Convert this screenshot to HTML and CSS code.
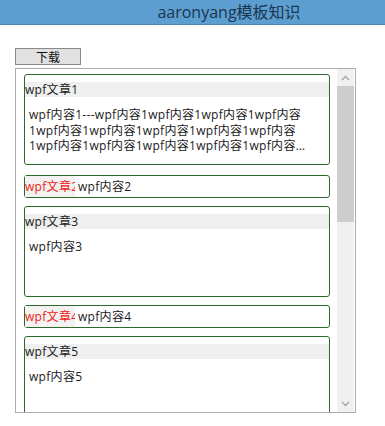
FILE: index.html
```html
<!DOCTYPE html>
<html lang="zh-cn">

<head>
    <meta charset="UTF-8">
    <title>aaronyang模板知识</title>
    <link rel="stylesheet" href="styles.css">
</head>

<body>
    <div class="titlebar">aaronyang模板知识</div>

    <div class="toolbar">
        <button class="btnDownload" type="button">下载</button>
    </div>

    <!-- 文章列表 -->
    <div class="listbox">
        <div class="items">
            <div class="item item-big">
                <div class="item-title">wpf文章1</div>
                <div class="item-content">wpf内容1---wpf内容1wpf内容1wpf内容1wpf内容1wpf内容1wpf内容1wpf内容1wpf内容1wpf内容1wpf内容1wpf内容1wpf内容1wpf内容1wpf内容1wpf内容1wpf内容1</div>
            </div>
            <div class="item item-small">
                <span class="item-name">wpf文章2</span>
                <span class="item-text">wpf内容2</span>
            </div>
            <div class="item item-big">
                <div class="item-title">wpf文章3</div>
                <div class="item-content">wpf内容3</div>
            </div>
            <div class="item item-small">
                <span class="item-name">wpf文章4</span>
                <span class="item-text">wpf内容4</span>
            </div>
            <div class="item item-big">
                <div class="item-title">wpf文章5</div>
                <div class="item-content">wpf内容5</div>
            </div>
        </div>
        <div class="scrollbar">
            <div class="arrow arrow-up">
                <svg width="9" height="6" viewBox="0 0 9 6"><path d="M1 5 L4.5 1.5 L8 5" fill="none" stroke="#a3a3a3" stroke-width="1.3"/></svg>
            </div>
            <div class="thumb"></div>
            <div class="track"></div>
            <div class="arrow arrow-down">
                <svg width="9" height="6" viewBox="0 0 9 6"><path d="M1 1 L4.5 4.5 L8 1" fill="none" stroke="#a3a3a3" stroke-width="1.3"/></svg>
            </div>
        </div>
    </div>
</body>

</html>
```

FILE: styles.css
```css
body {
    margin: 0;
    font-family: "Open Sans", "Noto Sans CJK SC", sans-serif;
    font-size: 12px;
    color: #1a1a1a;
    background-color: white;
}

.titlebar {
    height: 25px;
    line-height: 24px;
    background-color: #5b9ecf;
    border-bottom: 1px solid #4f86b2;
    box-sizing: border-box;
    color: #1c3550;
    font-size: 16px;
    text-align: center;
    padding-left: 73px;
}

.toolbar {
    padding: 23px 0 0 15px;
    height: 20px;
}

.btnDownload {
    display: block;
    width: 66px;
    height: 17px;
    padding: 0;
    background-color: #e1e1e1;
    border: 1px solid #8a8a8a;
    font-family: "Noto Sans CJK SC", sans-serif;
    font-size: 12px;
    line-height: 14px;
    color: #111;
}

.listbox {
    margin: 0 0 0 15px;
    width: 341px;
    height: 345px;
    box-sizing: border-box;
    border: 1px solid #acaab4;
    display: flex;
}

.items {
    flex: 1;
    overflow: hidden;
    padding: 5px 7px 0 8px;
    letter-spacing: 0.3px;
}

.item {
    border: 1px solid #2c6a2c;
    border-radius: 3px;
    box-sizing: border-box;
    margin-bottom: 8px;
}

.item-big {
    height: 91px;
    padding-top: 7px;
}

.item-big:first-child {
    margin-bottom: 10px;
}

.item-title {
    height: 15px;
    line-height: 15px;
    background-color: #efefef;
}

.item-content {
    margin-top: 10px;
    padding: 0 6px 0 4px;
    line-height: 15.5px;
    display: -webkit-box;
    -webkit-line-clamp: 3;
    -webkit-box-orient: vertical;
    overflow: hidden;
}

.item-small {
    height: 23px;
    line-height: 21px;
    display: flex;
    gap: 3px;
}

.item-name {
    width: 50px;
    overflow: hidden;
    white-space: nowrap;
    color: #ee2020;
    background-color: #f4f1f1;
}

.scrollbar {
    width: 17px;
    margin-right: 1px;
    background-color: #f0f0f0;
    display: flex;
    flex-direction: column;
}

.arrow {
    height: 17px;
    display: flex;
    align-items: center;
    justify-content: center;
}

.thumb {
    height: 136px;
    background-color: #cdcdcd;
}

.track {
    flex: 1;
}
```
